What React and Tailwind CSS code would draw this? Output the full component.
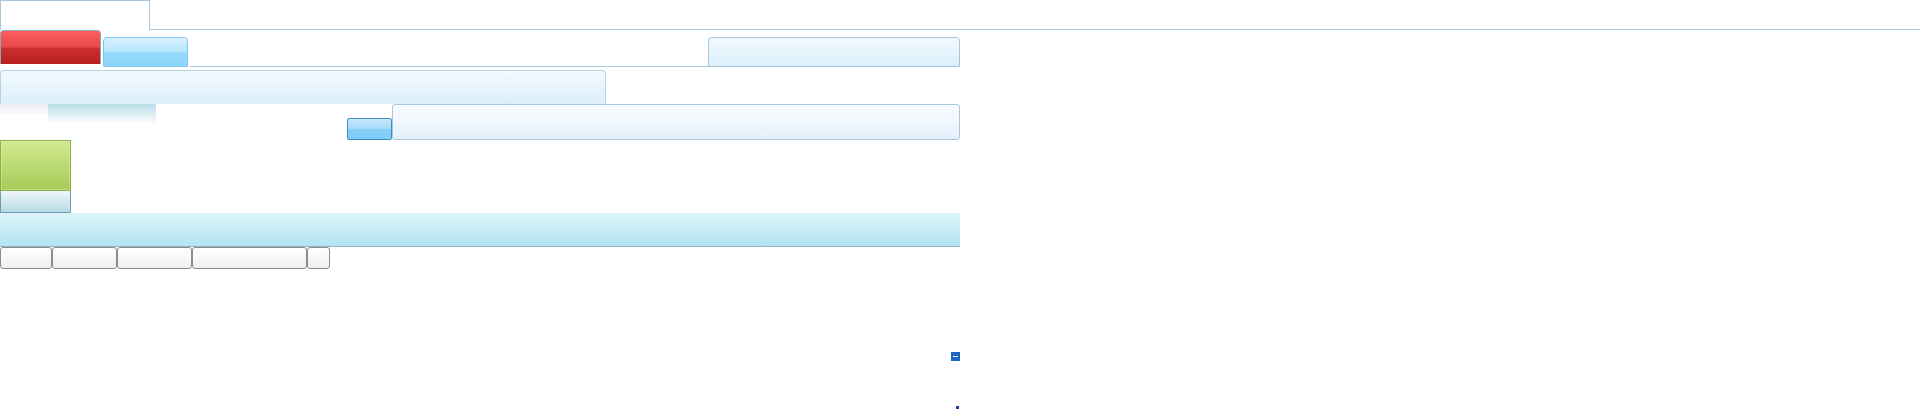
import React from "react";

const tabs = [52, 65, 75, 115, 23];

const App = () => {
  return (
    <div className="w-full h-[409px] bg-white overflow-hidden font-['Liberation_Sans',sans-serif]">
      {/* Top tab strip */}
      <div className="flex h-[30px]">
        <div className="w-[150px] h-[30px] border-l border-t border-r border-[#a9c7dc]" />
        <div className="flex-1 border-b border-[#a9c7dc]" />
      </div>

      <div className="w-[960px]">
        {/* Toolbar row */}
        <div className="flex items-end h-[37px]">
          <button className="w-[101px] h-[34px] mb-[3px] rounded-t-[4px] border border-b-0 border-[#8fa7b5] bg-[linear-gradient(to_bottom,#ff5e5e_0%,#e84848_48%,#cd2f2f_52%,#b51f1f_100%)]" />
          <div className="ml-[2px] w-[85px] h-[30px] rounded-t-[4px] border border-[#7ccaf0] bg-[linear-gradient(to_bottom,#d8f2fe_0%,#b6e6fd_48%,#98dbfc_52%,#8bd5fb_100%)]" />
          <div className="ml-[2px] flex-1 border-b border-[#a9c7dc]" />
          <div className="w-[252px] h-[30px] rounded-t-[4px] border border-[#a9c7dc] bg-linear-to-b from-[#f3f9fe] to-[#dbeffb]" />
        </div>

        {/* Header panel */}
        <div className="mt-[3px] w-[606px] h-[34px] rounded-t-[4px] border border-b-0 border-[#b4d2e4] bg-linear-to-b from-[#f3f9fe] to-[#dbeffb]" />

        {/* Filter row */}
        <div className="flex h-[36px]">
          <div className="w-[48px] h-[10px] bg-linear-to-b from-[#ececf4] to-[#fbfbfe]" />
          <div className="w-[108px] h-[20px] bg-linear-to-b from-[#b8dce6] to-white" />
          <div className="flex-1 flex items-end justify-end">
            <button className="w-[45px] h-[22px] rounded-[2px] border border-[#3b8cbf] bg-[linear-gradient(to_bottom,#c8e9fc_0%,#a4dcfa_48%,#87d0fa_52%,#7ccdf9_100%)]" />
          </div>
          <div className="w-[568px] h-[36px] rounded-[3px] border border-[#a9c7dc] bg-linear-to-b from-[#f8fbfe] via-[#f1f7fd] to-[#e4f1fb]" />
        </div>

        {/* Side tiles */}
        <div className="w-[71px] h-[51px] border border-[#8eae48] bg-linear-to-b from-[#d0ea8e] to-[#a8ca57] shadow-[inset_0_0_0_1px_rgba(255,255,255,0.25)]" />
        <div className="w-[71px] h-[22px] border border-t-0 border-[#6f9db3] bg-linear-to-b from-[#f0f6f8] to-[#b7dbe5]" />

        {/* Band */}
        <div className="h-[34px] border-b border-[#90b7c9] bg-linear-to-b from-[#ddf4f9] to-[#b1e4f3]" />

        {/* Bottom tabs */}
        <div className="flex h-[22px]">
          {tabs.map((w, i) => (
            <div
              key={i}
              style={{ width: w }}
              className="h-[22px] rounded-[3px] border border-[#8c8c8c] bg-linear-to-b from-white to-[#efefef]"
            />
          ))}
        </div>

        {/* Small controls */}
        <div className="flex justify-end mt-[83px]">
          <div className="w-[9px] h-[9px] bg-[#1a67c5] flex items-center justify-center">
            <div className="w-[5px] h-[1px] bg-white" />
          </div>
        </div>
        <div className="flex justify-end mt-[45px] pr-[1px]">
          <div className="w-[3px] h-[3px] bg-[#1f3f8f]" />
        </div>
      </div>
    </div>
  );
};

export default App;
